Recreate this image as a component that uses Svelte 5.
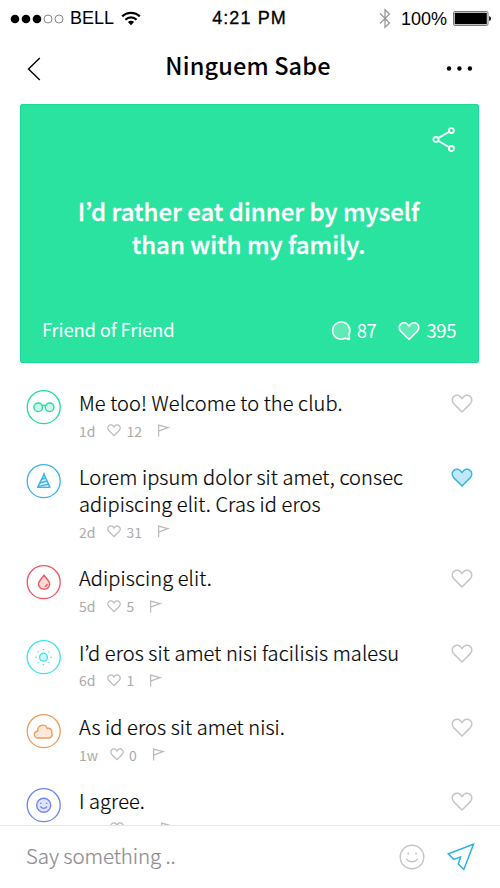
<script>
	let draft = '';

	let comments = [
		{ icon: 'glasses', color: 'green', lines: ['Me too! Welcome to the club.'], age: '1d', likes: 12 },
		{
			icon: 'hat',
			color: 'blue',
			lines: ['Lorem ipsum dolor sit amet, consec', 'adipiscing elit. Cras id eros'],
			age: '2d',
			likes: 31,
			liked: true
		},
		{ icon: 'drop', color: 'red', lines: ['Adipiscing elit.'], age: '5d', likes: 5 },
		{ icon: 'sun', color: 'cyan', lines: ['I’d eros sit amet nisi facilisis malesu'], age: '6d', likes: 1 },
		{ icon: 'cloud', color: 'orange', lines: ['As id eros sit amet nisi.'], age: '1w', likes: 0 },
		{ icon: 'smile', color: 'indigo', lines: ['I agree.'], age: '1w', likes: 12 }
	];

	const heart =
		'M11 18 L2.9 9.9 C0.6 7.4 0.7 4.2 2.9 2.4 C5.2 0.4 8.7 0.8 11 4.6 C13.3 0.8 16.8 0.4 19.1 2.4 C21.3 4.2 21.4 7.4 19.1 9.9 Z';
</script>

<div class="screen">
	<div class="status">
		<div class="carrier">
			<svg class="signal" width="53" height="10" viewBox="0 0 53 10">
				<circle cx="4" cy="5" r="4.3" />
				<circle cx="15" cy="5" r="4.3" />
				<circle cx="26" cy="5" r="4.3" />
				<circle class="off" cx="37" cy="5" r="4" />
				<circle class="off" cx="48" cy="5" r="4" />
			</svg>
			<span class="operator">BELL</span>
			<svg class="wifi" width="20" height="15" viewBox="0 0 20 15">
				<path d="M1.2 5.4 A12.6 12.6 0 0 1 18.8 5.4" />
				<path d="M4.4 8.7 A8 8 0 0 1 15.6 8.7" />
				<path class="fill" d="M10 14.2 L6.9 11.1 A4.4 4.4 0 0 1 13.1 11.1 Z" />
			</svg>
		</div>
		<span class="clock">4:21 PM</span>
		<div class="power">
			<svg class="bluetooth" width="12" height="21" viewBox="0 0 12 21">
				<path d="M1 5.5 L10.5 15 L6 19.3 V1.7 L10.5 6 L1 15.5" />
			</svg>
			<span class="percent">100%</span>
			<svg width="38" height="15" viewBox="0 0 38 15">
				<rect class="case" x="0.5" y="0.5" width="34.5" height="14" rx="1.5" />
				<rect x="1.7" y="1.7" width="32.1" height="11.6" rx="0.5" />
				<path d="M36.2 5 Q38 5.5 38 7.5 Q38 9.5 36.2 10 Z" />
			</svg>
		</div>
	</div>

	<header>
		<button class="back" aria-label="Back">
			<svg width="14" height="24" viewBox="0 0 14 24"><path d="M12.8 1 L1.5 12 L12.8 23" /></svg>
		</button>
		<h1>Ninguem Sabe</h1>
		<button class="more" aria-label="More">
			<svg width="26" height="6" viewBox="0 0 26 6">
				<circle cx="2" cy="2.5" r="2.2" />
				<circle cx="12.4" cy="2.5" r="2.2" />
				<circle cx="22.9" cy="2.5" r="2.2" />
			</svg>
		</button>
	</header>

	<section class="card">
		<button class="share" aria-label="Share">
			<svg width="24" height="26" viewBox="0 0 24 26">
				<path d="M6.1 11.1 L16.9 5 M6.1 13.8 L16.9 20" />
				<circle cx="3.9" cy="12.4" r="2.5" />
				<circle cx="19.4" cy="3.6" r="2.5" />
				<circle cx="19.4" cy="21.5" r="2.5" />
			</svg>
		</button>
		<p class="quote">I’d rather eat dinner by myself<br />than with my family.</p>
		<div class="card-footer">
			<span class="source">Friend of Friend</span>
			<svg class="bubble" width="20" height="20" viewBox="0 0 20 20">
				<path d="M18.2 12.8 A8.6 8.6 0 1 0 14 17.3 L18.4 18.4 Z" />
			</svg>
			<span class="count replies">87</span>
			<svg class="card-heart" width="22" height="20" viewBox="0 0 22 19"><path d={heart} /></svg>
			<span class="count">395</span>
		</div>
	</section>

	<ul class="comments">
		{#each comments as comment}
			<li>
				<div class="avatar {comment.color}">
					<svg width="36" height="36" viewBox="0 0 36 36">
						<circle class="ring" cx="17.7" cy="17.2" r="16.5" />
						{#if comment.icon === 'glasses'}
							<circle class="tint" cx="12.2" cy="17.3" r="4.3" />
							<circle class="tint" cx="23.6" cy="17.3" r="4.3" />
							<path d="M16 15.9 Q17.9 14.5 19.8 15.9" />
						{:else if comment.icon === 'hat'}
							<path class="tint" d="M18 10.4 L24 23.4 H11.6 Z" />
							<path d="M15.8 15.3 L19.5 13.8 M14.1 19 L21.2 16.8 M12.9 22.4 L22.7 20.1" />
							<path d="M18 8.7 V11" />
						{:else if comment.icon === 'drop'}
							<path class="tint" d="M18.1 10.1 C20.1 13.3 23.7 16.2 23.7 19 A5.6 5.2 0 0 1 12.5 19 C12.5 16.2 16.1 13.3 18.1 10.1 Z" />
							<path d="M21.2 18.7 Q21 21 18.7 21.4" />
						{:else if comment.icon === 'sun'}
							<circle class="tint" cx="17.5" cy="17.2" r="3.9" />
							<path class="rays" d="M17.5 9.1 V10.3 M17.5 24.1 V25.3 M9.4 17.2 H10.6 M24.4 17.2 H25.6 M11.7 11.4 L12.5 12.2 M22.5 22.2 L23.3 23 M11.7 23 L12.5 22.2 M22.5 12.2 L23.3 11.4" />
						{:else if comment.icon === 'cloud'}
							<path class="tint" d="M12.3 24 A3.7 3.5 0 0 1 11.7 17 C11.3 14.3 13.1 11.4 16.1 11.2 C18.7 10.8 20.6 12.5 21.2 14.5 C24.2 13.6 26.5 16.2 25.7 18.7 C27 21.2 25.3 24 22.9 24 Z" />
						{:else}
							<circle class="tint" cx="17.7" cy="17.2" r="7" />
							<path d="M14.8 14.7 V15.9 M20.6 14.7 V15.9 M14.3 18.5 Q17.7 22.2 21.1 18.5" />
						{/if}
					</svg>
				</div>
				<div class="body">
					<p>
						{#each comment.lines as line}
							<span class="line">{line}</span>
						{/each}
					</p>
					<div class="meta">
						<span class="age">{comment.age}</span>
						<svg width="14" height="13" viewBox="0 0 22 20"><path d={heart} /></svg>
						<span class="likes">{comment.likes}</span>
						<svg width="12" height="13" viewBox="0 0 12 13"><path class="flag" d="M0.6 12.5 V1.2 L10 3.7 L0.6 7.2" /></svg>
					</div>
				</div>
				<button class="like" class:liked={comment.liked} aria-label="Like" on:click={() => (comment.liked = !comment.liked)}>
					<svg width="22" height="19" viewBox="0 0 22 19"><path d={heart} /></svg>
				</button>
			</li>
		{/each}
	</ul>

	<footer>
		<input bind:value={draft} placeholder="Say something .." />
		<button class="emoji" aria-label="Emoji">
			<svg width="26" height="26" viewBox="0 0 26 26">
				<circle cx="13" cy="13" r="11.8" />
				<path d="M9.2 8.6 V10.4 M17 8.6 V10.4 M7 14.9 Q13 20.7 19 14.9" />
			</svg>
		</button>
		<button class="send" aria-label="Send">
			<svg width="28" height="28" viewBox="0 0 28 28">
				<path d="M26.5 1.3 L1.3 10.9 L6.7 16.4 L13.6 13.9 L11.3 21 L16.8 26.5 Z" />
			</svg>
		</button>
	</footer>
</div>

<style>
	:global(body) {
		margin: 0;
		background: #fff;
	}
	.screen {
		display: flex;
		flex-direction: column;
		width: 500px;
		height: 888px;
		overflow: hidden;
		background: #fff;
		color: #000;
		font-family: 'Noto Sans CJK KR', 'Noto Sans', sans-serif;
	}
	button {
		display: flex;
		padding: 0;
		border: none;
		background: none;
		cursor: pointer;
	}
	svg {
		display: block;
		flex: none;
		overflow: visible;
	}
	h1,
	p,
	ul {
		margin: 0;
		padding: 0;
	}

	.status {
		display: grid;
		grid-template-columns: 1fr auto 1fr;
		align-items: center;
		flex: none;
		height: 37px;
		padding: 0 9px 0 11px;
		font-family: 'Liberation Sans', Arial, sans-serif;
		font-size: 18px;
		color: #000;
	}
	.carrier,
	.power {
		display: flex;
		align-items: center;
	}
	.power {
		justify-content: flex-end;
	}
	.signal .off {
		fill: none;
		stroke: #555;
		stroke-width: 0.7;
	}
	.operator {
		margin-left: 6px;
	}
	.wifi {
		margin-left: 7px;
		fill: none;
		stroke: #000;
		stroke-width: 2.2;
	}
	.wifi .fill {
		fill: #000;
		stroke: none;
	}
	.clock {
		margin-right: 3px;
		letter-spacing: 1.1px;
		-webkit-text-stroke: 0.3px #000;
	}
	.bluetooth {
		fill: none;
		stroke: #999;
		stroke-width: 1.3;
	}
	.percent {
		margin: 1px 6px 0 10px;
	}
	.case {
		fill: none;
		stroke: #555;
		stroke-width: 0.8;
	}

	header {
		display: flex;
		align-items: center;
		justify-content: space-between;
		flex: none;
		height: 63px;
		padding: 0 27px;
	}
	h1 {
		margin: -7px 0 0 8px;
		font-size: 23.5px;
		font-weight: 500;
		letter-spacing: 0.15px;
		line-height: 34px;
	}
	.back path {
		fill: none;
		stroke: #000;
		stroke-width: 1.4;
	}

	.card {
		display: flex;
		flex-direction: column;
		flex: none;
		box-sizing: border-box;
		width: 459px;
		height: 259px;
		margin: 4px 0 0 20px;
		padding: 23px 23px 18px 22px;
		border-radius: 3px;
		background: #2ae3a1;
		box-shadow: inset 0 0 0 1px #1bdc96;
		color: #fff;
	}
	.share {
		align-self: flex-end;
	}
	.share svg {
		fill: none;
		stroke: #fff;
		stroke-width: 1.8;
	}
	.quote {
		margin: 41px 1px 0 0;
		font-size: 24px;
		font-weight: 500;
		line-height: 33px;
		text-align: center;
		-webkit-text-stroke: 0.3px #fff;
	}
	.card-footer {
		display: flex;
		align-items: center;
		margin-top: auto;
		font-size: 18.5px;
		line-height: 30px;
	}
	.source {
		margin: -4px auto 0 0;
		letter-spacing: -0.2px;
	}
	.bubble,
	.card-heart {
		fill: rgba(255, 255, 255, 0.25);
		stroke: #fff;
		stroke-width: 1.6;
		stroke-linejoin: round;
	}
	.count {
		margin: -1px 0 0 6px;
		letter-spacing: -0.4px;
	}
	.replies {
		margin-right: 22px;
	}

	.comments {
		flex: 1;
		min-height: 0;
		overflow: hidden;
		padding-top: 27px;
		list-style: none;
	}
	li {
		display: flex;
		align-items: flex-start;
		padding: 0 27px 22.6px 26px;
	}
	.avatar {
		width: 36px;
	}
	.avatar svg {
		fill: none;
		stroke: currentColor;
		stroke-width: 1.4;
		stroke-linejoin: round;
	}
	.ring {
		stroke-width: 1.3;
	}
	.tint {
		fill: currentColor;
		fill-opacity: 0.22;
	}
	.green {
		color: #1fe09b;
	}
	.blue {
		color: #3bb5e6;
	}
	.red {
		color: #f0585d;
	}
	.cyan {
		color: #3fe3ec;
	}
	.orange {
		color: #f39c5a;
	}
	.indigo {
		color: #6f86f8;
	}
	.body {
		flex: 1;
		margin-left: 17px;
	}
	.line {
		display: block;
		font-size: 20px;
		font-weight: 300;
		letter-spacing: 0.1px;
		line-height: 26.7px;
		white-space: nowrap;
		-webkit-text-stroke: 0.2px #000;
	}
	.meta {
		display: flex;
		align-items: center;
		height: 20px;
		margin: 4px 0 1px;
		color: #aaa;
		font-size: 14px;
		line-height: 20px;
	}
	.meta svg {
		fill: none;
		stroke: #bbb;
		stroke-width: 2;
	}
	.meta svg .flag {
		stroke-width: 1.3;
	}
	.age {
		margin-right: 12px;
	}
	.likes {
		margin: 0 16px 0 5px;
	}
	.like {
		margin-top: 4px;
	}
	.like svg {
		fill: none;
		stroke: #c6c6c6;
		stroke-width: 1.5;
		stroke-linejoin: round;
	}
	.liked svg {
		fill: #c1e8f8;
		stroke: #3bb5e6;
	}

	footer {
		display: flex;
		align-items: center;
		flex: none;
		box-sizing: border-box;
		height: 63px;
		padding: 0 25px 0 26px;
		border-top: 1px solid #e6e6e6;
	}
	input {
		flex: 1;
		min-width: 0;
		padding: 0 0 4px;
		border: none;
		outline: none;
		background: none;
		font-family: inherit;
		font-size: 20.5px;
		font-weight: 300;
		letter-spacing: -0.1px;
	}
	input::placeholder {
		color: #8c8c8c;
		opacity: 1;
		-webkit-text-stroke: 0.2px #8c8c8c;
	}
	.emoji svg {
		fill: none;
		stroke: #c4c4c4;
		stroke-width: 1.4;
	}
	.send {
		margin-left: 22px;
	}
	.send svg {
		fill: none;
		stroke: #29b2e8;
		stroke-width: 1.5;
	}
</style>
